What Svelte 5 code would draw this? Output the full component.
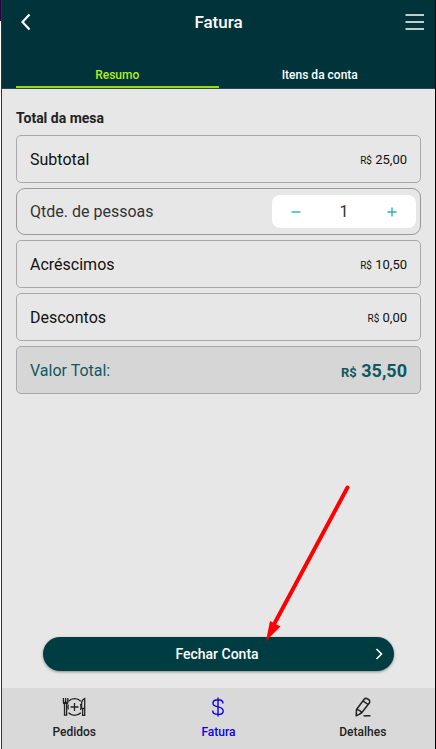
<script>
	let tab = 'resumo';
	let pessoas = 1;

	const less = () => {
		if (pessoas > 1) pessoas -= 1;
	}

	const more = () => {
		pessoas += 1;
	}
</script>

<div class="page">
	<div class="app">
		<header>
			<div class="bar">
				<button class="icon_btn" aria-label="Voltar">
					<svg width="24" height="24" viewBox="0 0 24 24"><path d="M17.5 4.5 L10.5 12 L17.5 19.5" fill="none" stroke="#fff" stroke-width="2.2" /></svg>
				</button>
				<h1>Fatura</h1>
				<button class="icon_btn" aria-label="Menu">
					<svg width="24" height="24" viewBox="0 0 24 24"><path d="M4.500 5H23M4.500 12H23M4.500 19H23" fill="none" stroke="#fff" stroke-width="1.6" /></svg>
				</button>
			</div>
			<div class="tabs">
				<button class="tab" class:active={tab == 'resumo'} on:click={() => (tab = 'resumo')}>Resumo</button>
				<button class="tab" class:active={tab == 'itens'} on:click={() => (tab = 'itens')}>Itens da conta</button>
			</div>
		</header>

		<main>
			<h2>Total da mesa</h2>
			<div class="rows">
				<div class="row">
					<span>Subtotal</span>
					<span class="value"><small>R$</small> 25,00</span>
				</div>
				<div class="row people">
					<span>Qtde. de pessoas</span>
					<div class="stepper">
						<button aria-label="Menos" on:click={less}>
							<svg width="12" height="12" viewBox="0 0 12 12"><path d="M1.500 6H10.500" stroke="#25b5b0" stroke-width="1.400" /></svg>
						</button>
						<output>{pessoas}</output>
						<button aria-label="Mais" on:click={more}>
							<svg width="12" height="12" viewBox="0 0 12 12"><path d="M1.500 6H10.500M6 1.500V10.500" stroke="#25b5b0" stroke-width="1.400" /></svg>
						</button>
					</div>
				</div>
				<div class="row">
					<span>Acréscimos</span>
					<span class="value"><small>R$</small> 10,50</span>
				</div>
				<div class="row">
					<span>Descontos</span>
					<span class="value"><small>R$</small> 0,00</span>
				</div>
				<div class="row total">
					<span>Valor Total:</span>
					<span class="value"><small>R$</small> 35,50</span>
				</div>
			</div>
			<div class="action">
				<button class="close_btn">
					<span>Fechar Conta</span>
					<svg width="12" height="12" viewBox="0 0 12 12"><path d="M3.5 1 L8.5 6 L3.5 11" fill="none" stroke="#fff" stroke-width="1.6" /></svg>
				</button>
				<svg class="arrow" width="90" height="158" viewBox="0 0 90 158">
					<path d="M81.500 4.500 L9 139.500" stroke="#f00" stroke-width="4" stroke-linecap="round" />
					<path d="M0 158 L4 138 L14.500 143.500 Z" fill="#f00" />
				</svg>
			</div>
		</main>

		<nav>
			<a href="#pedidos">
				<svg width="24" height="24" viewBox="0 0 24 24" fill="none" stroke="#222" stroke-width="1.3">
					<path d="M1.400 3V7.500Q1.400 9 2.500 9V20.200H4.600V9Q5.800 9 5.800 7.500V3M3.600 3V9M1.400 7.500H5.800" />
					<path d="M6.500 6.200A8.500 8.500 0 0 1 18.800 6.200M6.500 17.800A8.500 8.500 0 0 0 18.800 17.800" />
					<path d="M6.300 9.500A8 8 0 0 0 6.300 14.500M18.500 9A8 8 0 0 1 18.500 15" />
					<path d="M12.500 8V16M8.500 12H16.500" />
					<path d="M22.700 20.300H20.600V14L19.600 13V8Q20 4.500 22.700 3.500Z M20 13.500H22.700" />
				</svg>
				Pedidos
			</a>
			<a href="#fatura" class="current">
				<svg width="24" height="24" viewBox="0 0 24 24" fill="none" stroke="#0c00e8" stroke-width="1.4">
					<path d="M12 2.500V21.500M17 8.500C17 6 15 4.800 12 4.800C9 4.800 7 6.200 7 8.200C7 10.500 9 11.200 12 11.900C15.500 12.700 17.200 13.700 17.200 15.900C17.200 18 15 19.400 12 19.400C8.800 19.400 6.700 17.900 6.700 15.500" />
				</svg>
				Fatura
			</a>
			<a href="#detalhes">
				<svg width="24" height="24" viewBox="0 0 24 24" fill="none" stroke="#222" stroke-width="1.5" stroke-linejoin="round">
					<path d="M5.500 14.500L13 4.500Q14.500 2.500 16.700 4Q19.800 5.500 18.300 8L10.500 18L5.200 20.800Z M5.500 14.500Q9.500 14.800 10.500 18M12 5.800L17 9.500" />
					<path d="M12.500 20.800H19.500" />
				</svg>
				Detalhes
			</a>
		</nav>
	</div>
</div>

<style>
	:global(body) {
		margin: 0;
		background: #fff;
	}
	.page {
		padding-left: 1px;
		background: linear-gradient(#2a0040, #2a0040) 0 0 / 1px 21px no-repeat;
		font-family: Roboto, sans-serif;
	}
	.app {
		display: flex;
		flex-direction: column;
		box-sizing: border-box;
		min-height: 100vh;
		border-left: 1px solid #2b3353;
		border-right: 1px solid #000;
		background: #e7e7e7;
		color: #111;
	}
	button {
		margin: 0;
		padding: 0;
		border: none;
		background: none;
		font-family: inherit;
		cursor: pointer;
	}
	svg {
		display: block;
	}
	header {
		background: #00343a;
		border-bottom: 1px solid #24474d;
	}
	.bar {
		display: flex;
		align-items: center;
		justify-content: space-between;
		height: 44px;
		padding: 0 10px;
	}
	h1 {
		margin: 0;
		font-size: 17px;
		font-weight: 500;
		color: #fff;
	}
	.tabs {
		display: flex;
		height: 44px;
		padding: 0 14px;
	}
	.tab {
		flex: 1;
		padding-top: 20px;
		border-bottom: 2px solid transparent;
		font-size: 12px;
		font-weight: 500;
		color: #fff;
	}
	.tab.active {
		color: #b2ee1a;
		border-color: #9bd80f;
	}
	main {
		flex: 1;
		display: flex;
		flex-direction: column;
		padding: 20px 14px 17px;
	}
	h2 {
		margin: 0 0 8px;
		font-size: 14px;
		line-height: 18px;
		font-weight: 700;
		color: #222;
	}
	.rows {
		display: flex;
		flex-direction: column;
		gap: 5px;
	}
	.row {
		display: flex;
		align-items: center;
		justify-content: space-between;
		box-sizing: border-box;
		height: 48px;
		padding: 0 13px;
		border: 1px solid #a9a9a9;
		border-radius: 5px;
		font-size: 16px;
	}
	.people {
		height: 47px;
		padding-right: 4px;
		border-color: #999;
		border-radius: 9px;
		color: #333;
	}
	.value {
		font-size: 13px;
	}
	.value small {
		font-size: 10px;
	}
	.total {
		background: #d6d6d6;
		color: #10595f;
	}
	.total .value {
		font-size: 18px;
		font-weight: 700;
	}
	.total small {
		font-size: 13px;
	}
	.stepper {
		display: flex;
		align-items: center;
		width: 144px;
		height: 33px;
		border-radius: 8px;
		background: #fff;
	}
	.stepper button, .stepper output {
		flex: 1;
		display: flex;
		align-items: center;
		justify-content: center;
		height: 100%;
	}
	.action {
		position: relative;
		margin-top: auto;
		padding: 0 27px;
	}
	.close_btn {
		display: flex;
		align-items: center;
		width: 100%;
		height: 34px;
		padding: 0 9px 0 18px;
		border-radius: 17px;
		background: #003d43;
		box-shadow: 0 1px 3px rgba(0, 0, 0, 0.4);
		color: #fff;
		font-size: 14px;
		font-weight: 500;
	}
	.close_btn span {
		flex: 1;
	}
	/* pointer drawn over the button */
	.arrow {
		position: absolute;
		left: 250px;
		bottom: 30px;
		pointer-events: none;
	}
	nav {
		display: flex;
		height: 61px;
		background: #d9d9d9;
	}
	nav a {
		flex: 1;
		display: flex;
		flex-direction: column;
		align-items: center;
		gap: 6px;
		padding-top: 7px;
		font-size: 12px;
		line-height: 14px;
		font-weight: 500;
		color: #222;
		text-decoration: none;
	}
	nav .current {
		color: #0c00e8;
	}
</style>
